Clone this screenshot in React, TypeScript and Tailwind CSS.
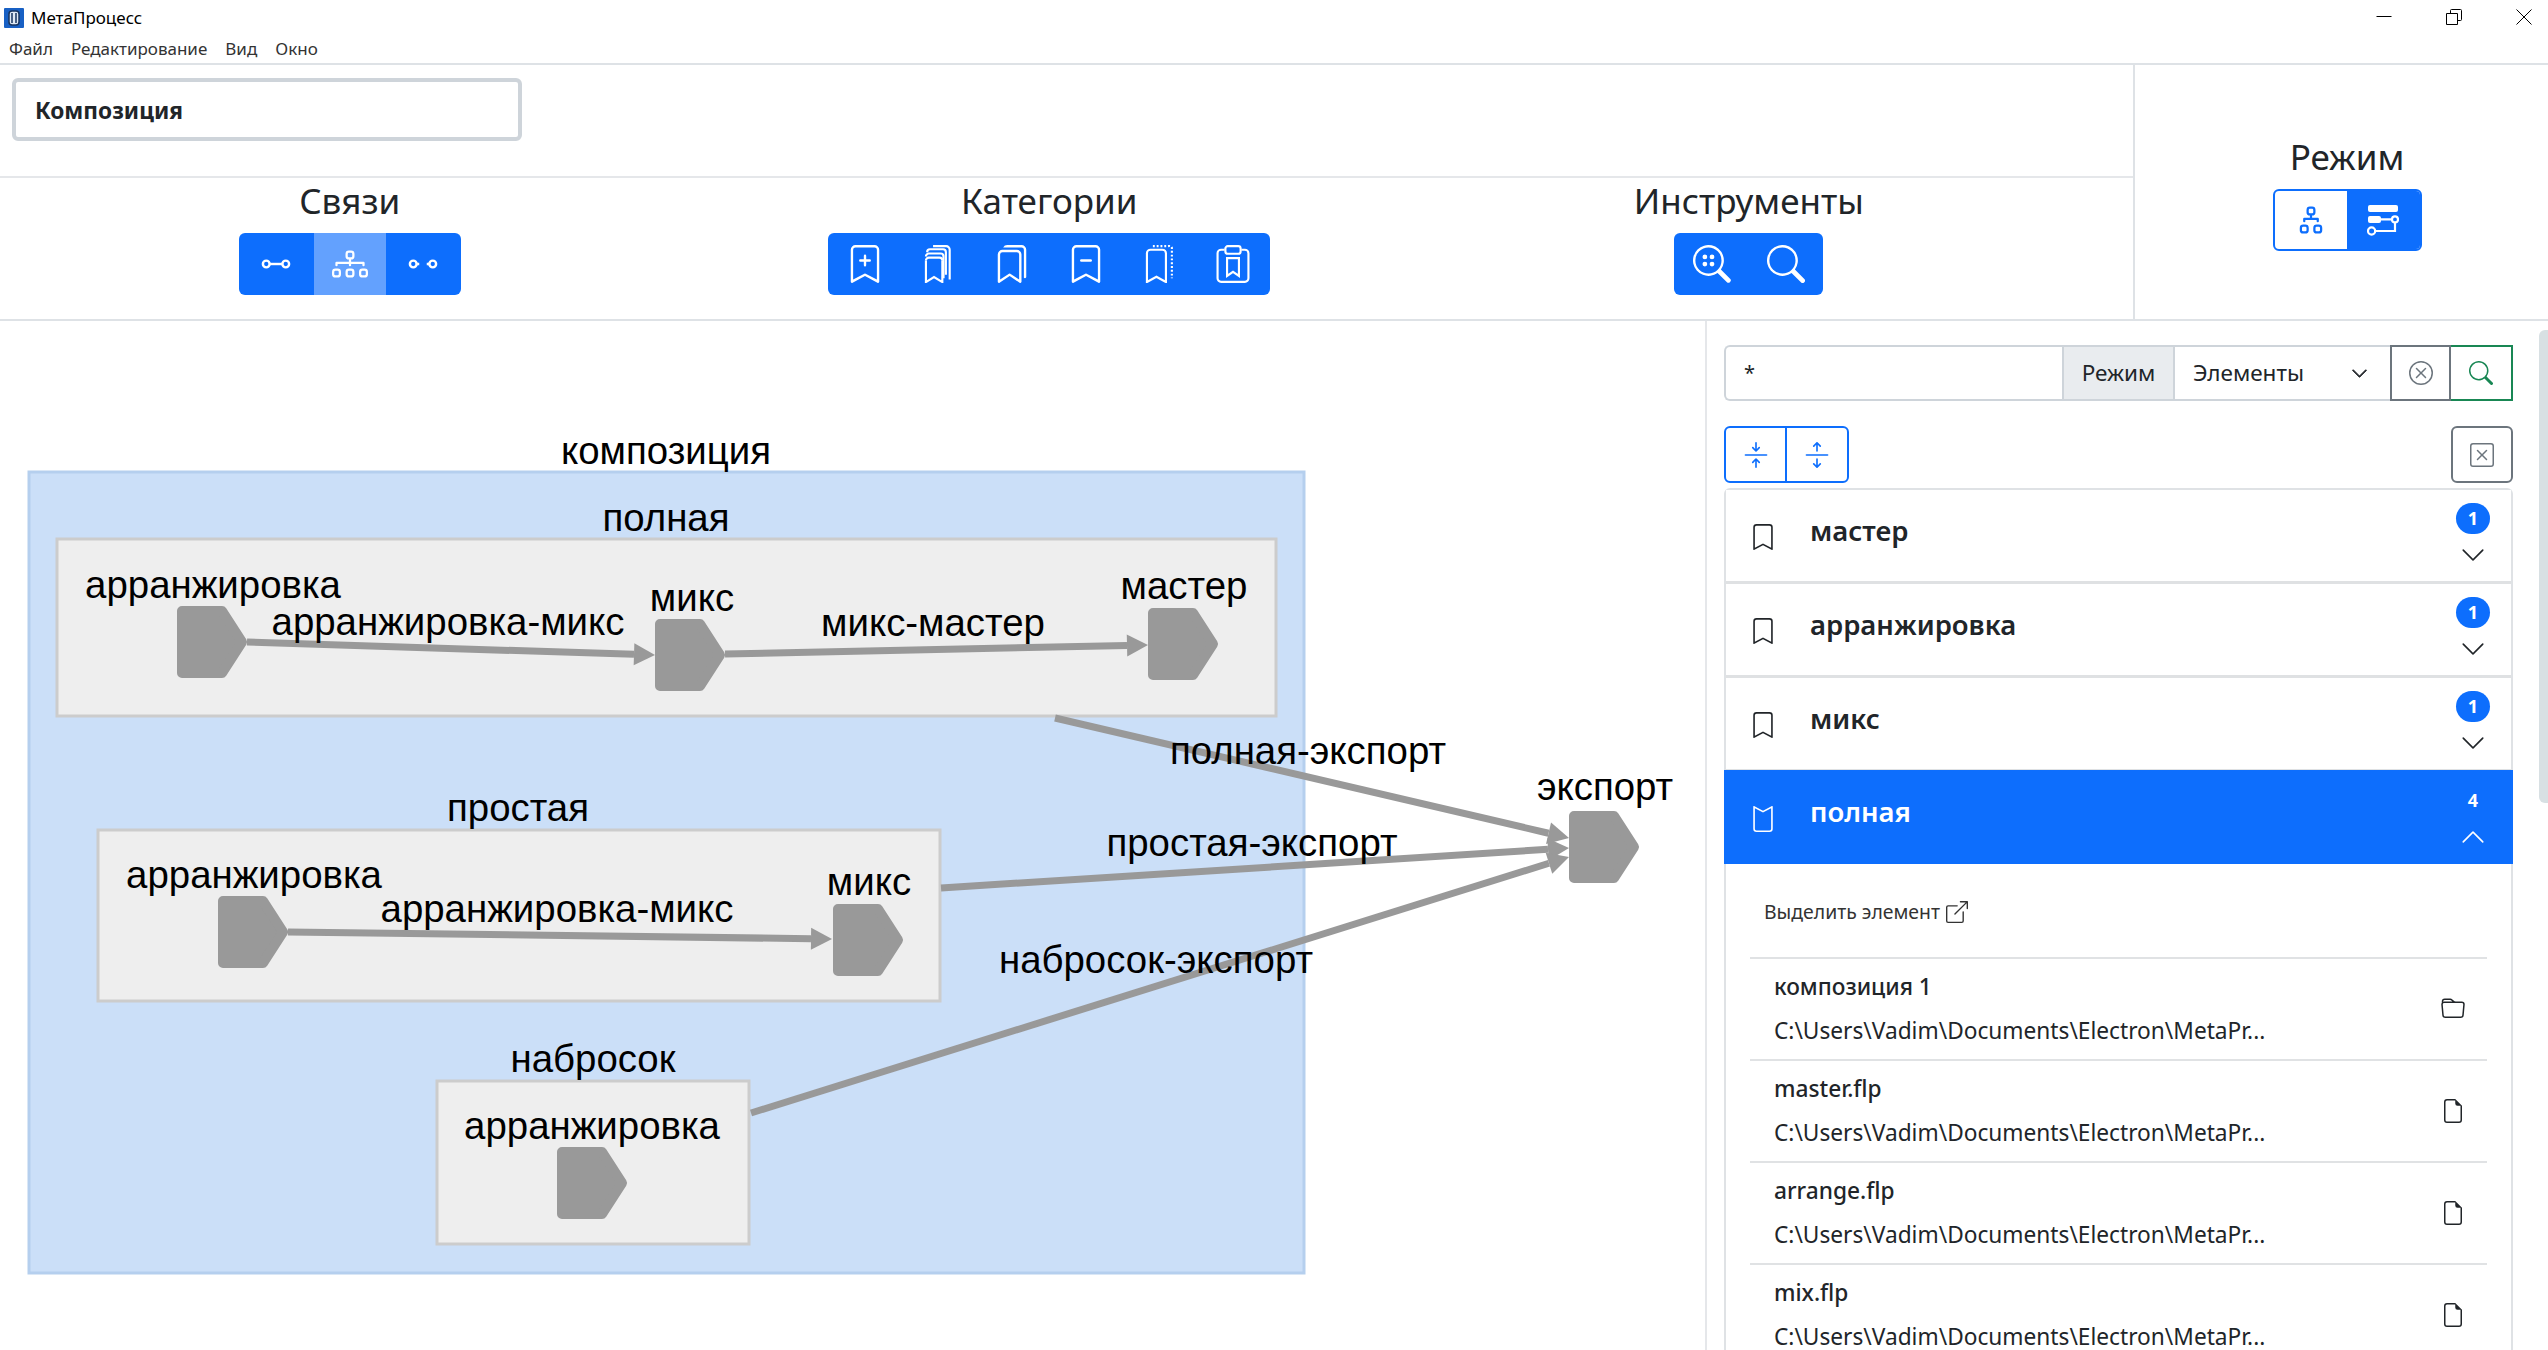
import {
  BsBookmark,
  BsBookmarkDash,
  BsBookmarkPlus,
  BsBookmarks,
  BsArrowsCollapse,
  BsArrowsExpand,
  BsBoxArrowUpRight,
  BsChevronDown,
  BsChevronUp,
  BsDiagram2,
  BsDiagram3,
  BsFileEarmark,
  BsFolder,
  BsSearch,
  BsXCircle,
  BsXSquare,
} from "react-icons/bs"

const LinkIcon = () => (
  <svg width="30" height="30" viewBox="0 0 16 16" fill="none" stroke="currentColor" strokeWidth="1.300">
    <circle cx="2.800" cy="8" r="1.800" />
    <circle cx="13.200" cy="8" r="1.800" />
    <path d="M4.600 8h6.800" />
  </svg>
)

const UnlinkIcon = () => (
  <svg width="30" height="30" viewBox="0 0 16 16" fill="none" stroke="currentColor" strokeWidth="1.300">
    <circle cx="2.800" cy="8" r="1.800" />
    <circle cx="13.200" cy="8" r="1.800" />
    <path d="M4.600 8h1.400M10 8h1.400" />
  </svg>
)

const BookmarksStack = () => (
  <svg width="38" height="38" viewBox="0 0 16 16" fill="none" stroke="currentColor" strokeWidth="0.900">
    <path d="M2.500 6.500V15.600L5.900 13.500L9.400 15.600V6.500" />
    <path d="M2.500 6.500a1.200 1.200 0 0 1 1.200-1.200h4.500a1.200 1.200 0 0 1 1.200 1.200" />
    <path d="M2.500 4.800a1.200 1.200 0 0 1 1.200-1.200h5a1.200 1.200 0 0 1 1.200 1.200V14" />
    <path d="M3 3a1.200 1.200 0 0 1 1.200-1.200h5.500A1.200 1.200 0 0 1 10.900 3V12.500" />
    <path d="M5.500 0.500h5.500A1.500 1.500 0 0 1 12.500 2v12.500" />
  </svg>
)

const BookmarkDotted = () => (
  <svg width="38" height="38" viewBox="0 0 16 16" fill="none" stroke="currentColor" strokeWidth="0.900">
    <path d="M2.500 3.500A1.500 1.500 0 0 1 4 2h5A1.500 1.500 0 0 1 10.500 3.500V15.600L6.500 13.400L2.500 15.600z" />
    <path d="M5 0.500h6.500A1 1 0 0 1 13 1.500V14" strokeDasharray="0.800 0.800" />
  </svg>
)

const ClipboardBookmark = () => (
  <svg width="38" height="38" viewBox="0 0 16 16" fill="none" stroke="currentColor" strokeWidth="0.900">
    <path d="M4.500 2H3A1.500 1.500 0 0 0 1.500 3.500V14A1.500 1.500 0 0 0 3 15.500H13A1.500 1.500 0 0 0 14.500 14V3.500A1.500 1.500 0 0 0 13 2H11.500" />
    <rect x="4.800" y="0.500" width="6.400" height="3.200" rx="1" />
    <path d="M5.500 5.500H10.500V13L8 11.300L5.500 13z" />
  </svg>
)

const SearchDots = () => (
  <svg width="38" height="38" viewBox="0 0 16 16" fill="currentColor">
    <path d="M11.742 10.344a6.500 6.500 0 1 0-1.397 1.398l3.850 3.850a1 1 0 0 0 1.415-1.414zM12 6.500a5.500 5.500 0 1 1-11 0 5.500 5.500 0 0 1 11 0" />
    <circle cx="5" cy="5" r="1" />
    <circle cx="8" cy="5" r="1" />
    <circle cx="5" cy="8" r="1" />
    <circle cx="8" cy="8" r="1" />
  </svg>
)

const FlowIcon = () => (
  <svg width="32" height="32" viewBox="0 0 16 16" fill="none" stroke="currentColor" strokeWidth="1.100">
    <rect x="0.500" y="0.500" width="15" height="3.500" rx="1" fill="currentColor" stroke="none" />
    <rect x="0.500" y="6" width="6.500" height="3.500" rx="1" fill="currentColor" stroke="none" />
    <path d="M7 7.700h5.500" />
    <circle cx="14" cy="7.700" r="1.500" />
    <circle cx="2.300" cy="13.500" r="1.800" />
    <path d="M4.100 13.500h9.900V9.200" />
  </svg>
)

const WindowIcon = ({ d }: { d: string }) => (
  <svg width="16" height="16" viewBox="0 0 16 16" fill="none" stroke="black" strokeWidth="1">
    <path d={d} />
  </svg>
)

const Section = ({ title, children }: { title: string; children: React.ReactNode }) => (
  <div className="flex flex-col items-center">
    <h3 className="text-[35px] leading-[40px] mt-[3px] text-[#212529]">{title}</h3>
    <div className="flex h-[62px] mt-[12px] rounded-[6px] overflow-hidden bg-[#0d6efd] text-white">{children}</div>
  </div>
)

const ToolButton = ({ children, active, w = "w-[73.670px]" }: { children: React.ReactNode; active?: boolean; w?: string }) => (
  <button className={`${w} h-full flex items-center justify-center ${active ? "bg-[#63a1fe]" : ""}`}>{children}</button>
)

const categories = ["мастер", "арранжировка", "микс"]

const AccordionRow = ({ name }: { name: string }) => (
  <div className="h-[94px] flex items-center border-b-[3px] border-[#dfe1e3] pl-[26px] pr-[20px] bg-white text-[#212529]">
    <BsBookmark size={26} className="shrink-0 -ml-[2px] mt-[3px]" />
    <span className="ml-[34px] text-[27.500px] font-semibold leading-none -mt-[10px] flex-1">{name}</span>
    <div className="flex flex-col items-center w-[36px]">
      <span className="w-[34px] h-[31px] rounded-full bg-[#0d6efd] text-white text-[18px] font-bold flex items-center justify-center">1</span>
      <BsChevronDown size={26} className="mt-[8px]" />
    </div>
  </div>
)

const files = [
  { name: "композиция 1", folder: true },
  { name: "master.flp" },
  { name: "arrange.flp" },
  { name: "mix.flp" },
]

const FileRow = ({ name, folder }: { name: string; folder?: boolean }) => (
  <div className="h-[102px] shrink-0 flex items-center border-b-[2px] border-[#e0e2e4] pl-[24px] pr-[22px]">
    <div className="flex-1 text-[#212529]">
      <div className="text-[22.700px] font-medium leading-[28px]">{name}</div>
      <div className="text-[22.700px] leading-[28px] mt-[16px]">C:\Users\Vadim\Documents\Electron\MetaPr...</div>
    </div>
    {folder ? <BsFolder size={24} /> : <BsFileEarmark size={24} />}
  </div>
)

const Node = ({ x, y }: { x: number; y: number }) => (
  <path
    fill="#999999"
    strokeLinejoin="round"
    stroke="#999999"
    strokeWidth="10"
    d={`M${x + 5} ${y + 5}H${x + 45}L${x + 65} ${y + 36}L${x + 45} ${y + 67}H${x + 5}Z`}
  />
)

const Edge = ({ x1, y1, x2, y2 }: { x1: number; y1: number; x2: number; y2: number }) => {
  const a = Math.atan2(y2 - y1, x2 - x1)
  const len = 21
  const half = 11
  const bx = x2 - Math.cos(a) * len
  const by = y2 - Math.sin(a) * len
  const px = -Math.sin(a) * half
  const py = Math.cos(a) * half
  return (
    <g>
      <line x1={x1} y1={y1} x2={bx} y2={by} stroke="#999999" strokeWidth="7" />
      <path fill="#999999" d={`M${x2} ${y2}L${bx + px} ${by + py}L${bx - px} ${by - py}Z`} />
    </g>
  )
}

const Label = ({ x, y, children }: { x: number; y: number; children: string }) => (
  <text x={x} y={y} textAnchor="middle" fontSize="38.400" fill="#000000">
    {children}
  </text>
)

const Diagram = () => (
  <svg className="block font-['Liberation_Sans',sans-serif]" width="1706" height="1029" viewBox="0 321 1706 1029">
    <rect x="29" y="472" width="1275" height="801" fill="#cbdff8" stroke="#b5cfee" strokeWidth="3" />
    <rect x="57" y="539" width="1219" height="177" fill="#eeeeee" stroke="#cccccc" strokeWidth="3" />
    <rect x="98" y="830" width="842" height="171" fill="#eeeeee" stroke="#cccccc" strokeWidth="3" />
    <rect x="437" y="1081" width="312" height="163" fill="#eeeeee" stroke="#cccccc" strokeWidth="3" />

    <Node x={177} y={606} />
    <Node x={655} y={619} />
    <Node x={1148} y={608} />
    <Node x={218} y={896} />
    <Node x={833} y={904} />
    <Node x={557} y={1147} />
    <Node x={1569} y={811} />

    <Edge x1={247} y1={642} x2={655} y2={655} />
    <Edge x1={725} y1={654} x2={1148} y2={645} />
    <Edge x1={288} y1={932} x2={832} y2={939} />
    <Edge x1={1055} y1={718} x2={1569} y2={838} />
    <Edge x1={941} y1={888} x2={1569} y2={848} />
    <Edge x1={751} y1={1113} x2={1569} y2={857} />

    <Label x={666} y={464}>композиция</Label>
    <Label x={666} y={531}>полная</Label>
    <Label x={213} y={598}>арранжировка</Label>
    <Label x={448} y={635}>арранжировка-микс</Label>
    <Label x={692} y={611}>микс</Label>
    <Label x={933} y={636}>микс-мастер</Label>
    <Label x={1184} y={599}>мастер</Label>
    <Label x={1308} y={764}>полная-экспорт</Label>
    <Label x={1605} y={800}>экспорт</Label>
    <Label x={1252} y={856}>простая-экспорт</Label>
    <Label x={1156} y={973}>набросок-экспорт</Label>
    <Label x={518} y={821}>простая</Label>
    <Label x={254} y={888}>арранжировка</Label>
    <Label x={557} y={922}>арранжировка-микс</Label>
    <Label x={869} y={895}>микс</Label>
    <Label x={593} y={1072}>набросок</Label>
    <Label x={592} y={1139}>арранжировка</Label>
  </svg>
)

const App = () => {
  return (
    <div className="w-[2548px] h-[1350px] overflow-hidden bg-white flex flex-col font-['Noto_Sans',sans-serif] text-[#212529]">
      {/* title bar and menu */}
      <header className="h-[65px] shrink-0 border-b-[2px] border-[#dee2e6] relative">
        <div className="h-[36px] flex items-center pl-[4px]">
          <svg width="20" height="20" viewBox="0 0 20 20">
            <rect width="20" height="20" rx="1" fill="#1860c4" />
            <rect x="5" y="3" width="10" height="14" rx="3" fill="#dfe9f5" stroke="#17345f" strokeWidth="1.500" />
            <path d="M8 5v10M12 5v10" stroke="#17345f" strokeWidth="1.500" />
          </svg>
          <span className="ml-[7px] text-[17px] text-black">МетаПроцесс</span>
        </div>
        <nav className="flex pl-[9px] gap-[18px] text-[17px] leading-[20px] mt-[3px] text-[#333333]">
          <span>Файл</span>
          <span>Редактирование</span>
          <span>Вид</span>
          <span>Окно</span>
        </nav>
        <div className="absolute top-[9px] right-[16px] flex gap-[54px]">
          <WindowIcon d="M0.500 7.500h15" />
          <WindowIcon d="M0.500 4.500h11v11h-11zM4.500 4.500v-3a1 1 0 0 1 1-1h9a1 1 0 0 1 1 1v9a1 1 0 0 1-1 1h-3" />
          <WindowIcon d="M0.500 0.500l15 15M15.500 0.500l-15 15" />
        </div>
      </header>

      {/* toolbar */}
      <div className="h-[256px] shrink-0 flex border-b-[2px] border-[#dee2e6]">
        <div className="w-[2135px] shrink-0 border-r-[2px] border-[#dee2e6] flex flex-col">
          <div className="h-[113px] border-b-[2px] border-[#e5e7ea] pl-[12px] pt-[13px]">
            <div className="w-[510px] h-[63px] border-[4px] border-[#ced4da] rounded-[6px] flex items-center pl-[19px] pt-[4px] text-[22.700px] font-bold">
              Композиция
            </div>
          </div>
          <div className="grid grid-cols-[699.500px_699.500px_699.500px]">
            <Section title="Связи">
              <ToolButton w="w-[75px]"><LinkIcon /></ToolButton>
              <ToolButton active w="w-[72px]"><BsDiagram3 size={36} /></ToolButton>
              <ToolButton w="w-[75px]"><UnlinkIcon /></ToolButton>
            </Section>
            <Section title="Категории">
              <ToolButton><BsBookmarkPlus size={38} /></ToolButton>
              <ToolButton><BookmarksStack /></ToolButton>
              <ToolButton><BsBookmarks size={38} /></ToolButton>
              <ToolButton><BsBookmarkDash size={38} /></ToolButton>
              <ToolButton><BookmarkDotted /></ToolButton>
              <ToolButton><ClipboardBookmark /></ToolButton>
            </Section>
            <Section title="Инструменты">
              <ToolButton w="w-[75px]"><SearchDots /></ToolButton>
              <ToolButton w="w-[74px]"><BsSearch size={38} /></ToolButton>
            </Section>
          </div>
        </div>
        <div className="flex-1 flex flex-col items-center pt-[70px] pl-[11px]">
          <h3 className="text-[35px] leading-[44px]">Режим</h3>
          <div className="flex h-[62px] mt-[10px] w-[149px] rounded-[6px] overflow-hidden border-[2px] border-[#0d6efd]">
            <button className="w-[72px] flex items-center justify-center text-[#0d6efd]"><BsDiagram2 size={36} /></button>
            <button className="flex-1 flex items-center justify-center bg-[#0d6efd] text-white"><FlowIcon /></button>
          </div>
        </div>
      </div>

      {/* canvas and side panel */}
      <div className="flex-1 flex min-h-0 relative">
        <div className="w-[1707px] shrink-0 border-r-[2px] border-[#e5e7ea]">
          <Diagram />
        </div>
        <div className="flex-1 pl-[17px] pt-[24px] min-w-0 flex flex-col">
          <div className="w-[789px] h-[56px] shrink-0 flex text-[22.500px]">
            <div className="w-[338px] border-2 border-r-0 border-[#ced4da] rounded-l-[6px] pl-[18px] pt-[12px] leading-[28px] text-[20px]">*</div>
            <div className="w-[113px] bg-[#e9ecef] border-2 border-[#ced4da] flex items-center justify-center">Режим</div>
            <div className="w-[215px] border-y-2 border-[#ced4da] flex items-center justify-between pl-[18px] pr-[22px]">
              <span>Элементы</span>
              <BsChevronDown size={17} strokeWidth={0.8} />
            </div>
            <button className="w-[61px] border-2 border-[#6c757d] flex items-center justify-center text-[#6c757d]"><BsXCircle size={24} /></button>
            <button className="w-[62px] border-2 border-l-0 border-[#198754] flex items-center justify-center text-[#198754]"><BsSearch size={24} /></button>
          </div>
          <div className="w-[789px] shrink-0 flex justify-between mt-[25px]">
            <div className="flex w-[125px] h-[57px] border-2 border-[#0d6efd] rounded-[6px] text-[#0d6efd]">
              <button className="w-[61px] border-r-2 border-[#0d6efd] flex items-center justify-center"><BsArrowsCollapse size={26} /></button>
              <button className="flex-1 flex items-center justify-center"><BsArrowsExpand size={26} /></button>
            </div>
            <button className="w-[62px] h-[57px] border-2 border-[#6c757d] rounded-[6px] flex items-center justify-center text-[#6c757d]"><BsXSquare size={24} /></button>
          </div>
          <div className="w-[789px] mt-[5px] border-x-[2px] border-t-[2px] border-[#dfe2e5] rounded-t-[6px] flex flex-col">
            {categories.map((name) => (
              <AccordionRow key={name} name={name} />
            ))}
            <div className="h-[94px] -mx-[2px] -mt-[2px] flex items-center bg-[#0d6efd] text-white pl-[28px] pr-[22px]">
              <BsBookmark size={26} className="shrink-0 rotate-180 -ml-[2px] mt-[3px]" />
              <span className="ml-[34px] text-[27.500px] font-semibold leading-none -mt-[10px] flex-1">полная</span>
              <div className="flex flex-col items-center w-[36px]">
                <span className="h-[31px] text-[18px] font-bold flex items-center justify-center">4</span>
                <BsChevronUp size={26} className="mt-[8px]" />
              </div>
            </div>
            <div className="flex flex-col px-[24px]">
              <div className="h-[95px] shrink-0 flex items-center border-b-[2px] border-[#e0e2e4] pl-[14px] pt-[3px] text-[19.400px] text-[#333333]">
                Выделить элемент
                <BsBoxArrowUpRight size={22} className="ml-[6px]" />
              </div>
              {files.map((file) => (
                <FileRow key={file.name} name={file.name} folder={file.folder} />
              ))}
            </div>
          </div>
        </div>
        <div className="absolute right-0 top-[9px] w-[9px] h-[473px] bg-[#d8e0e3] rounded-l-[6px]" />
      </div>
    </div>
  )
}

export default App
